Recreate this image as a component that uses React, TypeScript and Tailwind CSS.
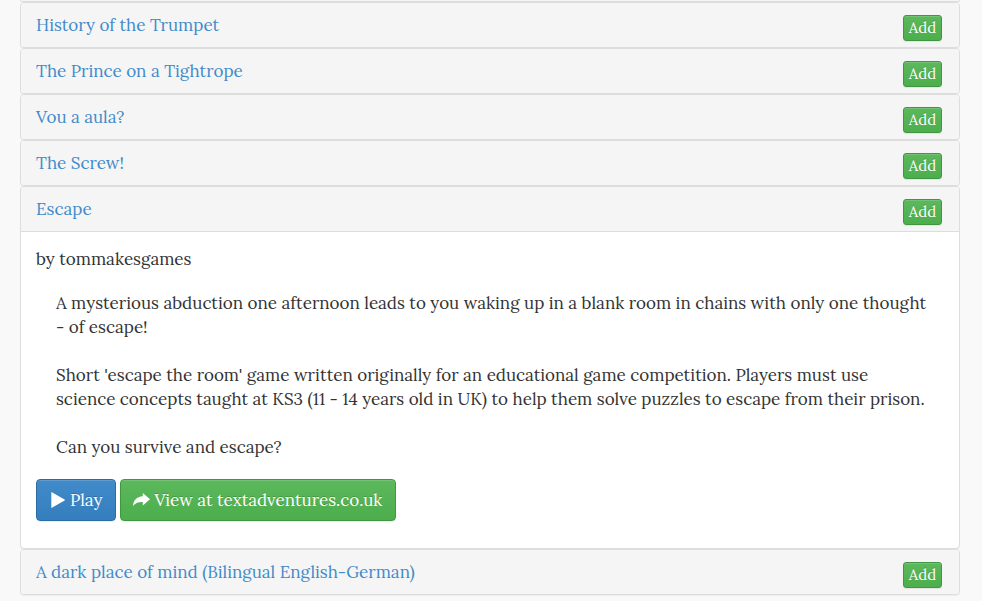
const FONT = "font-['Lora','Liberation_Serif',serif]";

const BUTTON = 'border text-white [text-shadow:0_-1px_0_rgba(0,0,0,0.2)] shadow-[inset_0_1px_0_rgba(255,255,255,0.15),0_1px_1px_rgba(0,0,0,0.075)]';
const GREEN = 'border-[#419641] bg-linear-to-b from-[#5cb85c] to-[#4cae4c]';
const BLUE = 'border-[#2d6ca2] bg-linear-to-b from-[#428bca] to-[#357ebd]';
const PANEL = 'overflow-hidden rounded border border-[#dddddd] bg-white shadow-[0_1px_1px_rgba(0,0,0,0.05)]';

function Heading({ title }: { title: string }) {
  return (
    <div className="flex items-start justify-between bg-[#f5f5f5] py-[10px] pr-[17px] pl-[15px]">
      <h4>
        <a href="#" className="text-[#428bca]">{title}</a>
      </h4>
      <button type="button" className={`mt-[2px] -mb-1 h-[26px] w-[39px] rounded-[3px] text-[15px] leading-6 ${BUTTON} ${GREEN}`}>
        Add
      </button>
    </div>
  );
}

export default function App() {
  const games = ['History of the Trumpet', 'The Prince on a Tightrope', 'Vou a aula?', 'The Screw!'];
  return (
    <main className={`min-h-screen bg-[#f9f9f9] pr-[22px] pl-5 text-[17px] leading-6 text-[#333333] ${FONT}`}>
      <div className="h-[2px] rounded-b border-x border-b border-[#dddddd] bg-[#f5f5f5]" />
      {games.map((title) => (
        <section key={title} className={PANEL}>
          <Heading title={title} />
        </section>
      ))}
      <section className={PANEL}>
        <Heading title="Escape" />
        <div className="border-t border-[#dddddd] px-[15px] pt-[15px] pb-[27px]">
          <p>by tommakesgames</p>
          <div className="py-5 pl-5">
            <p>
              A mysterious abduction one afternoon leads to you waking up in a blank room in chains with only one thought
              <br />- of escape!
            </p>
            <p className="mt-6">
              Short 'escape the room' game written originally for an educational game competition. Players must use
              <br />science concepts taught at KS3 (11 - 14 years old in UK) to help them solve puzzles to escape from their prison.
            </p>
            <p className="mt-6">Can you survive and escape?</p>
          </div>
          <div className="flex gap-1">
            <button type="button" className={`flex h-[42px] items-center gap-1 rounded pr-[13px] pl-[14px] ${BUTTON} ${BLUE}`}>
              <svg className="h-4 w-[15px]" viewBox="0 0 15 16" fill="currentColor" aria-hidden="true">
                <path d="M0.3 0.6Q0.3 0 0.9 0.3L13.6 7.6Q14.2 8 13.6 8.4L0.9 15.7Q0.3 16 0.3 15.4Z" />
              </svg>
              Play
            </button>
            <a href="#" className={`flex h-[42px] items-center gap-1 rounded pr-[13px] pl-3 ${BUTTON} ${GREEN}`}>
              <svg className="h-4 w-[17px]" viewBox="0 0 17 16" fill="currentColor" aria-hidden="true">
                <path d="M9.8 1L17 7.2L9.8 13.4V10C5.5 9.7 2.6 10.6 0 14C0.4 8.6 3.5 4.6 9.8 4.3Z" />
              </svg>
              View at textadventures.co.uk
            </a>
          </div>
        </div>
      </section>
      <section className={PANEL}>
        <Heading title="A dark place of mind (Bilingual English-German)" />
      </section>
    </main>
  );
}
